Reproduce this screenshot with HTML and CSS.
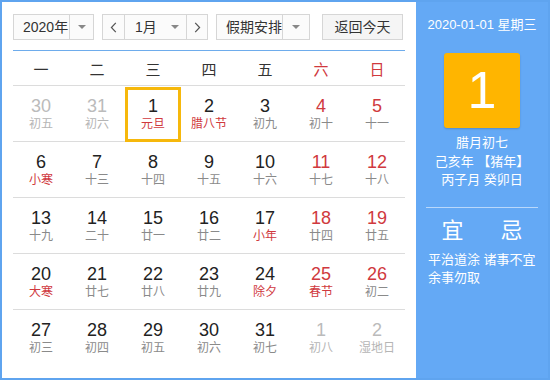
FILE: index.html
```html
<!DOCTYPE html>
<html lang="zh-CN">
<head>
<meta charset="utf-8">
<title>万年历</title>
<link rel="stylesheet" href="styles.css">
</head>
<body>
<div class="cal">
  <div class="main">
    <div class="toolbar">
      <div class="sel sel-year">
        <span class="sel-text">2020年</span>
        <span class="sel-arrow"><i class="tri"></i></span>
      </div>
      <div class="sel sel-month">
        <span class="nav nav-prev"><svg width="7" height="11" viewBox="0 0 7 11"><path d="M5.8 0.8 L1.4 5.5 L5.8 10.2" fill="none" stroke="#555" stroke-width="1.2"/></svg></span>
        <span class="month-text">1月</span>
        <span class="month-arrow"><i class="tri"></i></span>
        <span class="nav nav-next"><svg width="7" height="11" viewBox="0 0 7 11"><path d="M1.2 0.8 L5.6 5.5 L1.2 10.2" fill="none" stroke="#555" stroke-width="1.2"/></svg></span>
      </div>
      <div class="sel sel-holiday">
        <span class="sel-text">假期安排</span>
        <span class="sel-arrow"><i class="tri"></i></span>
      </div>
      <div class="btn-today">返回今天</div>
    </div>

    <div class="weekdays">
      <span>一</span><span>二</span><span>三</span><span>四</span><span>五</span><span class="wk-red">六</span><span class="wk-red">日</span>
    </div>

    <div class="weeks">
      <div class="week">
        <div class="day other"><span class="num">30</span><span class="lunar">初五</span></div>
        <div class="day other"><span class="num">31</span><span class="lunar">初六</span></div>
        <div class="day selected"><span class="num">1</span><span class="lunar fest">元旦</span></div>
        <div class="day"><span class="num">2</span><span class="lunar fest">腊八节</span></div>
        <div class="day"><span class="num">3</span><span class="lunar">初九</span></div>
        <div class="day weekend"><span class="num">4</span><span class="lunar">初十</span></div>
        <div class="day weekend"><span class="num">5</span><span class="lunar">十一</span></div>
      </div>
      <div class="week">
        <div class="day"><span class="num">6</span><span class="lunar fest">小寒</span></div>
        <div class="day"><span class="num">7</span><span class="lunar">十三</span></div>
        <div class="day"><span class="num">8</span><span class="lunar">十四</span></div>
        <div class="day"><span class="num">9</span><span class="lunar">十五</span></div>
        <div class="day"><span class="num">10</span><span class="lunar">十六</span></div>
        <div class="day weekend"><span class="num">11</span><span class="lunar">十七</span></div>
        <div class="day weekend"><span class="num">12</span><span class="lunar">十八</span></div>
      </div>
      <div class="week">
        <div class="day"><span class="num">13</span><span class="lunar">十九</span></div>
        <div class="day"><span class="num">14</span><span class="lunar">二十</span></div>
        <div class="day"><span class="num">15</span><span class="lunar">廿一</span></div>
        <div class="day"><span class="num">16</span><span class="lunar">廿二</span></div>
        <div class="day"><span class="num">17</span><span class="lunar fest">小年</span></div>
        <div class="day weekend"><span class="num">18</span><span class="lunar">廿四</span></div>
        <div class="day weekend"><span class="num">19</span><span class="lunar">廿五</span></div>
      </div>
      <div class="week">
        <div class="day"><span class="num">20</span><span class="lunar fest">大寒</span></div>
        <div class="day"><span class="num">21</span><span class="lunar">廿七</span></div>
        <div class="day"><span class="num">22</span><span class="lunar">廿八</span></div>
        <div class="day"><span class="num">23</span><span class="lunar">廿九</span></div>
        <div class="day"><span class="num">24</span><span class="lunar fest">除夕</span></div>
        <div class="day weekend"><span class="num">25</span><span class="lunar fest">春节</span></div>
        <div class="day weekend"><span class="num">26</span><span class="lunar">初二</span></div>
      </div>
      <div class="week">
        <div class="day"><span class="num">27</span><span class="lunar">初三</span></div>
        <div class="day"><span class="num">28</span><span class="lunar">初四</span></div>
        <div class="day"><span class="num">29</span><span class="lunar">初五</span></div>
        <div class="day"><span class="num">30</span><span class="lunar">初六</span></div>
        <div class="day"><span class="num">31</span><span class="lunar">初七</span></div>
        <div class="day other"><span class="num">1</span><span class="lunar">初八</span></div>
        <div class="day other"><span class="num">2</span><span class="lunar">湿地日</span></div>
      </div>
    </div>
  </div>

  <div class="side">
    <div class="side-date">2020-01-01 星期三</div>
    <div class="big-day">1</div>
    <div class="side-lunar">
      <div>腊月初七</div>
      <div>己亥年 【猪年】</div>
      <div>丙子月 癸卯日</div>
    </div>
    <div class="side-line"></div>
    <div class="yiji">
      <span>宜</span><span>忌</span>
    </div>
    <div class="yiji-text">
      <div>平治道涂 诸事不宜</div>
      <div>余事勿取</div>
    </div>
  </div>
</div>
</body>
</html>
```

FILE: styles.css
```css
* { box-sizing: border-box; }

html, body {
  margin: 0;
  padding: 0;
  background: #ffffff;
}

body {
  font-family: "Liberation Sans", "Noto Sans CJK SC", sans-serif;
  color: #333;
}

.cal {
  width: 550px;
  height: 380px;
  border: 2px solid #5fa4ef;
  display: flex;
  background: #fff;
}

.main {
  width: 414px;
  padding: 12px 11px 12px 11px;
}

/* toolbar */
.toolbar {
  display: flex;
  height: 26px;
}

.sel {
  display: flex;
  height: 26px;
  border: 1px solid #d6d6d6;
  background: #fbfbfb;
  font-size: 14px;
  line-height: 24px;
  color: #333;
  white-space: nowrap;
}

.sel-text { flex-shrink: 0; overflow: hidden; }

.sel-year { width: 81px; }
.sel-year .sel-text { width: 55px; padding-left: 9px; }

.sel-month { width: 106px; margin-left: 8px; }
.sel-holiday { width: 94px; margin-left: 8px; }
.sel-holiday .sel-text { width: 65px; padding-left: 9px; }

.sel-arrow {
  flex: 1;
  border-left: 1px solid #d6d6d6;
  display: flex;
  align-items: center;
  justify-content: center;
}

.tri {
  display: block;
  width: 0;
  height: 0;
  border-left: 4px solid transparent;
  border-right: 4px solid transparent;
  border-top: 4px solid #888;
}

.nav {
  width: 22px;
  flex-shrink: 0;
  display: flex;
  align-items: center;
  justify-content: center;
}
.nav svg { display: block; }
.nav-prev { border-right: 1px solid #d6d6d6; }
.nav-next { border-left: 1px solid #d6d6d6; width: 21px; }

.month-text { width: 38px; flex-shrink: 0; padding-left: 10px; }
.month-arrow {
  flex: 1;
  display: flex;
  align-items: center;
  justify-content: center;
}

.btn-today {
  width: 81px;
  height: 26px;
  margin-left: 12px;
  border: 1px solid #d6d6d6;
  background: #f5f5f5;
  font-size: 14px;
  line-height: 24px;
  text-align: center;
  color: #333;
  white-space: nowrap;
}

/* weekdays */
.weekdays {
  margin-top: 10px;
  height: 36px;
  border-top: 1px solid #6eacec;
  border-bottom: 1px solid #dcdcdc;
  display: grid;
  grid-template-columns: repeat(7, 1fr);
  align-items: center;
  text-align: center;
  font-size: 15px;
  color: #333;
}
.wk-red { color: #d0393e; }

/* days */
.week {
  display: grid;
  grid-template-columns: repeat(7, 1fr);
  height: 56px;
  border-bottom: 1px solid #dcdcdc;
}
.week:last-child { border-bottom: none; }

.day {
  position: relative;
  display: flex;
  flex-direction: column;
  align-items: center;
  padding-top: 10px;
}

.num {
  font-size: 18px;
  line-height: 20px;
  color: #222;
}

.lunar {
  font-size: 12px;
  line-height: 16px;
  color: #8a8a8a;
}

.lunar.fest { color: #d0393e; }
.weekend .num { color: #d0393e; }

.other .num { color: #bbb; }
.other .lunar { color: #b5b5b5; }

.selected::after {
  content: "";
  position: absolute;
  left: 0;
  right: 0;
  top: 1px;
  bottom: -1px;
  border: 3px solid #f6b80c;
}

/* side panel */
.side {
  flex: 1;
  background: #64a9f5;
  color: #fff;
  display: flex;
  flex-direction: column;
  align-items: center;
  padding-top: 14px;
}

.side-date {
  font-size: 13px;
  line-height: 18px;
}

.big-day {
  margin-top: 19px;
  width: 76px;
  height: 75px;
  background: #ffb500;
  border-radius: 3px;
  box-shadow: 0 1px 2px rgba(0, 0, 0, 0.18);
  font-size: 52px;
  line-height: 75px;
  text-align: center;
  color: #fff;
}

.side-lunar {
  margin-top: 6px;
  font-size: 13px;
  line-height: 18.5px;
  text-align: center;
}

.side-line {
  align-self: stretch;
  margin: 17px 10px 0 10px;
  height: 1px;
  background: rgba(255, 255, 255, 0.55);
}

.yiji {
  margin-top: 8px;
  display: flex;
  gap: 37px;
  font-size: 22px;
  line-height: 30px;
}

.yiji-text {
  align-self: stretch;
  padding-left: 12px;
  margin-top: 5px;
  font-size: 13px;
  line-height: 18px;
}
```
